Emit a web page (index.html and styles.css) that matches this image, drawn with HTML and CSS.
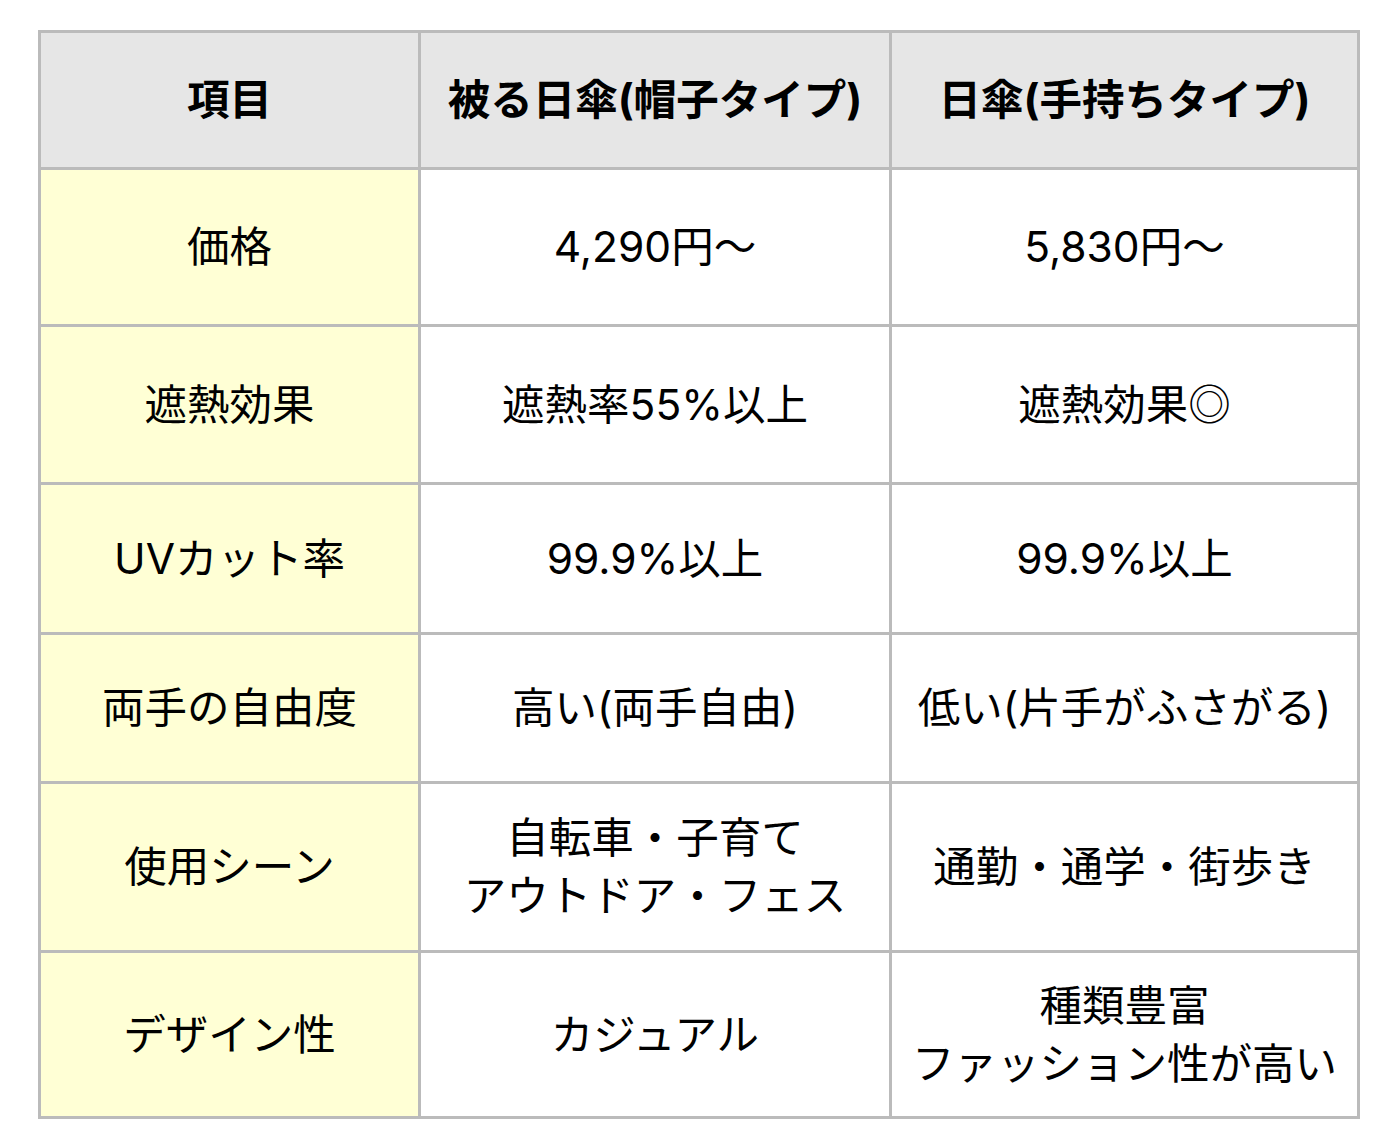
FILE: index.html
```html
<!DOCTYPE html>
<html lang="ja">
<head>
<meta charset="utf-8">
<link rel="stylesheet" href="styles.css">
</head>
<body>
<table class="cmp">
  <colgroup>
    <col class="c1"><col class="c2"><col class="c3">
  </colgroup>
  <thead>
    <tr class="r-head"><th>項目</th><th>被る日傘(帽子タイプ)</th><th>日傘(手持ちタイプ)</th></tr>
  </thead>
  <tbody>
    <tr class="r1"><td class="lbl">価格</td><td>4,290円〜</td><td>5,830円〜</td></tr>
    <tr class="r2"><td class="lbl">遮熱効果</td><td>遮熱率55%以上</td><td>遮熱効果◎</td></tr>
    <tr class="r3"><td class="lbl">UVカット率</td><td>99.9%以上</td><td>99.9%以上</td></tr>
    <tr class="r4"><td class="lbl">両手の自由度</td><td>高い(両手自由)</td><td>低い(片手がふさがる)</td></tr>
    <tr class="r5"><td class="lbl">使用シーン</td><td>自転車・子育て<br>アウトドア・フェス</td><td>通勤・通学・街歩き</td></tr>
    <tr class="r6"><td class="lbl">デザイン性</td><td>カジュアル</td><td>種類豊富<br>ファッション性が高い</td></tr>
  </tbody>
</table>
</body>
</html>
```
FILE: styles.css
```css
html, body {
  margin: 0;
  padding: 0;
  background: #fff;
}
body {
  padding: 30px 0 0 38px;
  font-family: "Inter", "Noto Sans CJK JP", sans-serif;
  color: #000;
}
.cmp {
  border-collapse: collapse;
  font-size: 42.5px;
  line-height: 58px;
}
.c1 { width: 380px; }
.c2 { width: 471px; }
.c3 { width: 468px; }
.cmp th, .cmp td {
  border: 3px solid #bbbbbb;
  text-align: center;
  vertical-align: middle;
  padding: 0;
}
.cmp th {
  background: #e6e6e6;
  font-weight: 700;
}
.cmp td.lbl {
  background: #ffffd5;
}
.r-head { height: 137px; }
.r1 { height: 157px; }
.r2 { height: 158px; }
.r3 { height: 150px; }
.r4 { height: 149px; }
.r5 { height: 169px; }
.r6 { height: 166px; }
```
